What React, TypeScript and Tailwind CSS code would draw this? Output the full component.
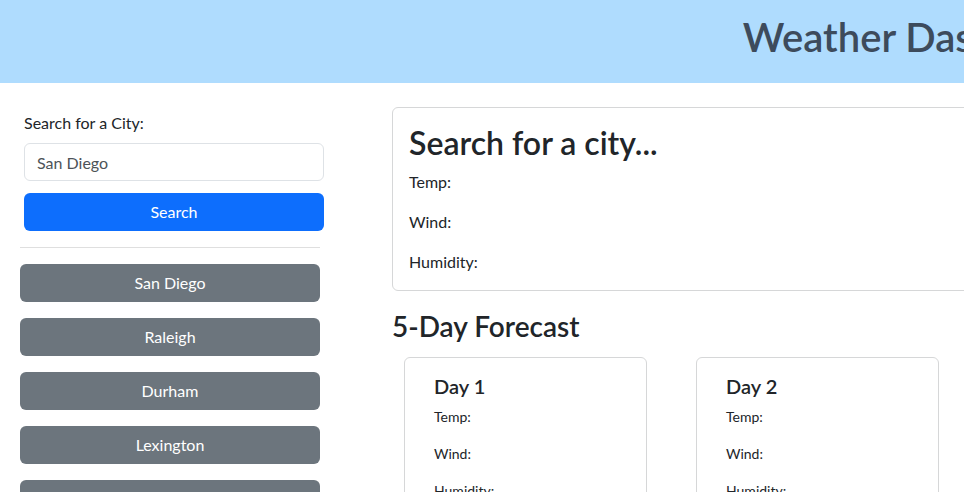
import React from "react";

const cities = ["San Diego", "Raleigh", "Durham", "Lexington", "Atlanta"];
const days = ["Day 1", "Day 2", "Day 3", "Day 4", "Day 5"];

function Forecast({ title }: { title: string }) {
  return (
    <div className="w-[243px] shrink-0 rounded-md border border-[#d6d7d8] bg-white pt-4 pl-[29px] pr-4 pb-4">
      <h5 className="mb-2 text-[20px] font-semibold leading-[24px]">{title}</h5>
      <p className="mb-4 text-[14px] leading-[21px]">Temp:</p>
      <p className="mb-4 text-[14px] leading-[21px]">Wind:</p>
      <p className="mb-4 text-[14px] leading-[21px]">Humidity:</p>
    </div>
  );
}

export default function App() {
  return (
    <div className="w-[964px] h-[492px] overflow-hidden bg-white">
      <div
        className="w-[1840px] text-[#212529]"
        style={{ fontFamily: '"Lato", "Liberation Sans", sans-serif' }}
      >
        {/* Header */}
        <header className="h-[83px] bg-[#afdcfe] flex justify-center pt-[13px]">
          <h1 className="text-[40px] font-semibold leading-[48px] text-[#3d4b5c]">Weather Dashboard</h1>
        </header>

        <div className="flex pt-[28px]">
          {/* Side Bar Section */}
          <aside className="w-[300px] ml-[20px] shrink-0">
            <div className="pl-[4px] w-[304px]">
              <label className="block text-[16px] leading-[24px] mb-2">Search for a City:</label>
              <input
                defaultValue="San Diego"
                className="block w-[300px] h-[38px] rounded-md border border-[#dee2e6] px-3 text-[16px] text-[#4d5358] outline-none"
              />
              <button className="mt-3 w-[300px] h-[38px] rounded-md bg-[#0d6efd] text-white text-[16px]">
                Search
              </button>
            </div>
            <hr className="mt-4 mb-4 border-t border-[#dfdfdf]" />
            <div className="flex flex-col gap-4">
              {cities.map((c) => (
                <button key={c} className="h-[38px] w-full rounded-md bg-[#6c757d] text-white text-[16px]">
                  {c}
                </button>
              ))}
            </div>
          </aside>

          {/* Main section */}
          <main className="ml-[72px] -mt-[4px] w-[1400px]">
            <div className="rounded-md border border-[#d6d7d8] p-4 pb-0">
              <h2 className="mb-2 text-[32px] font-semibold leading-[38px]">Search for a city...</h2>
              <p className="mb-4 text-[16px] leading-[24px]">Temp:</p>
              <p className="mb-4 text-[16px] leading-[24px]">Wind:</p>
              <p className="mb-4 text-[16px] leading-[24px]">Humidity:</p>
            </div>
            <h3 className="mt-[18px] text-[28px] font-semibold leading-[34px]">5-Day Forecast</h3>
            <div className="mt-[14px] ml-[12px] flex gap-[49px]">
              {days.map((d) => (
                <Forecast key={d} title={d} />
              ))}
            </div>
          </main>
        </div>
      </div>
    </div>
  );
}
